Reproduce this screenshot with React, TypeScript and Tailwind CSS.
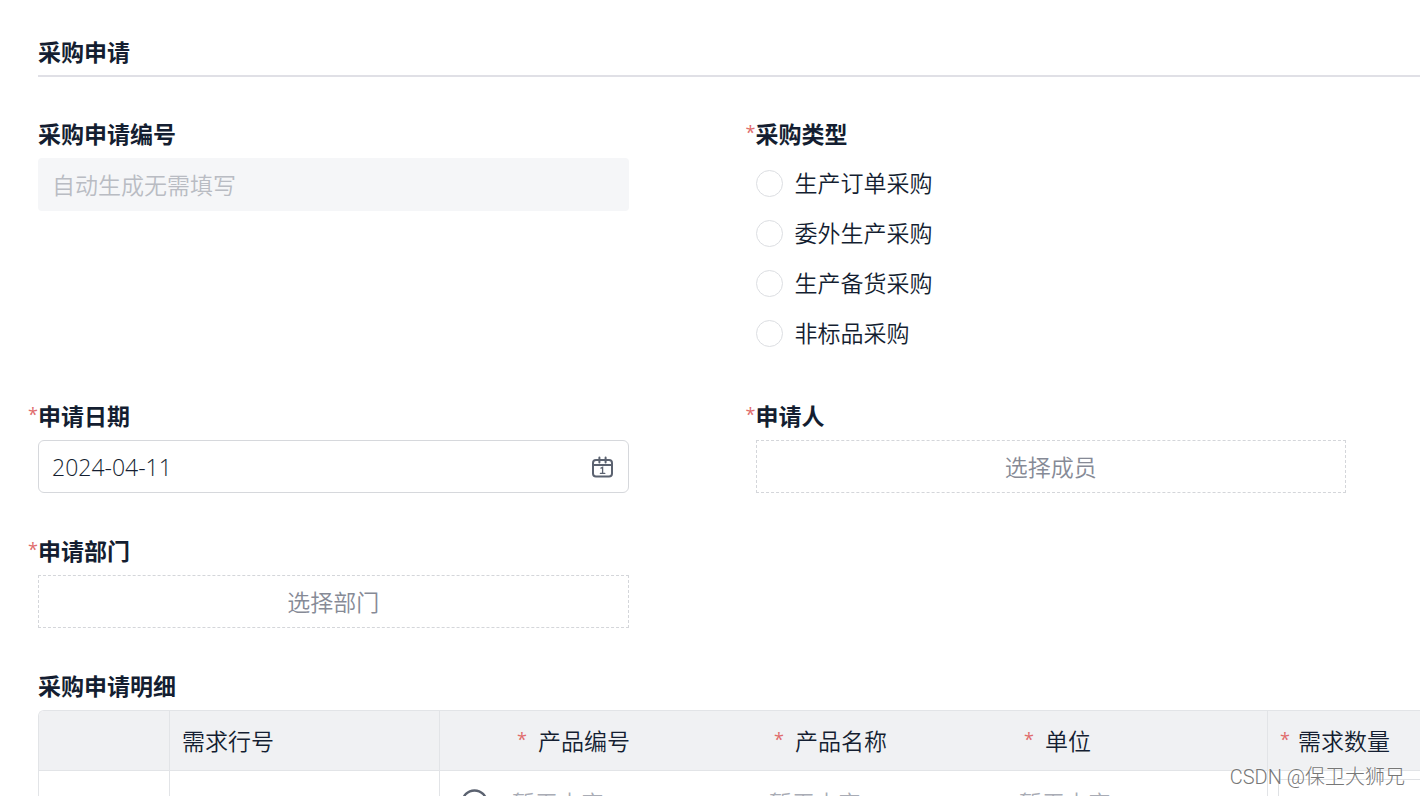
import { useState } from "react";
import { CirclePlus } from "lucide-react";

const purchaseTypes = ["生产订单采购", "委外生产采购", "生产备货采购", "非标品采购"];

function Star() {
  return <span className="pb-1 text-[18px] font-normal text-[#e06c6c]">*</span>;
}

function CalendarIcon() {
  return (
    <svg width="24" height="24" viewBox="0 0 24 24" fill="none" stroke="#5b6270" strokeWidth="2" strokeLinecap="round">
      <rect x="3" y="5" width="19" height="16.6" rx="3" />
      <path d="M3 10h19M9.4 2.6v4.8M15.6 2.6v4.8" />
      <path d="M11 13.2l1.6-.8v6M10.4 18.4h4.4" strokeWidth="1.3" />
    </svg>
  );
}

function FieldLabel({ text, id, required = false }: { text: string; id?: string; required?: boolean }) {
  return (
    <label htmlFor={id} className={`flex h-8 items-center font-bold ${required ? "-ml-[10px]" : ""}`}>
      {required && <Star />}
      {text}
    </label>
  );
}

function PickerButton({ id, children }: { id: string; children: string }) {
  return (
    <button
      id={id}
      type="button"
      className="h-[53px] w-full border border-dashed border-[#d4d6da] text-center font-[350] text-[#868a96]"
    >
      {children}
    </button>
  );
}

export default function App() {
  const [date, setDate] = useState("2024-04-11");
  const [type, setType] = useState("");

  return (
    <div className="relative h-screen overflow-hidden bg-white pl-[38px] pt-9 font-['Open_Sans','Noto_Sans_CJK_SC',sans-serif] text-[23px] leading-8 text-[#141e31]">
      <h1 className="border-b-2 border-[#e0e0e6] pb-[7px] font-bold">采购申请</h1>

      <form>
        <div className="mt-[41px] grid grid-cols-2 gap-x-[127px] gap-y-[42px] pr-[74px]">
          <div className="flex flex-col gap-2">
            <FieldLabel id="code" text="采购申请编号" />
            <input
              id="code"
              disabled
              placeholder="自动生成无需填写"
              className="h-[53px] w-full rounded-sm bg-[#f5f6f8] px-[14px] font-[350] placeholder:text-[#b9bcc3]"
            />
          </div>

          {/* Purchase type */}
          <fieldset>
            <legend className="mb-2 -ml-[10px] flex h-8 items-center font-bold">
              <Star />
              采购类型
            </legend>
            {purchaseTypes.map((t) => (
              <label key={t} className="flex h-[50px] items-center gap-3 font-[350]">
                <input
                  type="radio"
                  name="type"
                  checked={type === t}
                  onChange={() => setType(t)}
                  className="size-[27px] appearance-none rounded-full border border-[#dcdee2] bg-white checked:border-8 checked:border-blue-500"
                />
                {t}
              </label>
            ))}
          </fieldset>

          <div className="flex flex-col gap-2">
            <FieldLabel id="date" text="申请日期" required />
            <div className="flex h-[53px] items-center rounded-md border border-[#d6d8dc] pl-[13px] pr-[14px]">
              <input
                id="date"
                value={date}
                onChange={(e) => setDate(e.target.value)}
                className="min-w-0 flex-1 font-[350] outline-none"
              />
              <button type="button" aria-label="选择日期">
                <CalendarIcon />
              </button>
            </div>
          </div>

          <div className="flex flex-col gap-2">
            <FieldLabel id="member" text="申请人" required />
            <PickerButton id="member">选择成员</PickerButton>
          </div>

          <div className="flex flex-col gap-2">
            <FieldLabel id="dept" text="申请部门" required />
            <PickerButton id="dept">选择部门</PickerButton>
          </div>
        </div>

        {/* Detail lines */}
        <h2 className="mt-[42px] mb-2 font-bold">采购申请明细</h2>
        <table className="w-[110%] min-w-[1500px] table-fixed border-separate border-spacing-0 overflow-hidden rounded-tl-md border-l border-t border-[#e2e4e7] text-left font-[350]">
          <colgroup>
            <col className="w-[131px]" />
            <col className="w-[270px]" />
            <col className="w-[62px]" />
            <col className="w-[257px]" />
            <col className="w-[250px]" />
            <col className="w-[259px]" />
            <col />
          </colgroup>
          <thead>
            <tr className="h-[60px] bg-[#f0f1f3]">
              <th className="border-b border-r border-[#e2e4e7]" />
              <th className="border-b border-r border-[#e2e4e7] pl-3 font-[350]">需求行号</th>
              <th className="border-b border-[#e2e4e7]" />
              <th className="border-b border-[#e2e4e7] pl-[15px] font-[350]">
                <span className="flex items-center gap-[11px]"><Star />产品编号</span>
              </th>
              <th className="border-b border-[#e2e4e7] pl-[15px] font-[350]">
                <span className="flex items-center gap-[11px]"><Star />产品名称</span>
              </th>
              <th className="border-b border-r border-[#e2e4e7] pl-[15px] font-[350]">
                <span className="flex items-center gap-[11px]"><Star />单位</span>
              </th>
              <th className="border-b border-[#e2e4e7] pl-3 font-[350]">
                <span className="flex items-center gap-2"><Star />需求数量</span>
              </th>
            </tr>
          </thead>
          <tbody>
            <tr className="h-16 text-[#a9acb5]">
              <td className="border-b border-r border-[#e2e4e7]" />
              <td className="border-b border-r border-[#e2e4e7]" />
              <td className="border-b border-[#e2e4e7] pl-5">
                <button type="button" aria-label="选择产品" className="block text-[#5b6270]">
                  <CirclePlus size={29} strokeWidth={2} />
                </button>
              </td>
              <td className="border-b border-[#e2e4e7] pl-[10px]">暂无内容</td>
              <td className="border-b border-[#e2e4e7] pl-[10px]">暂无内容</td>
              <td className="border-b border-r border-[#e2e4e7] pl-[10px]">暂无内容</td>
              <td className="border-b border-[#e2e4e7] px-[10px]">
                <input aria-label="需求数量" className="block h-12 w-full border border-[#dfe1e4] px-3" />
              </td>
            </tr>
          </tbody>
        </table>
      </form>

      <div className="absolute right-[15px] bottom-1 font-['Roboto','Noto_Sans_CJK_SC',sans-serif] text-[20px] leading-[30px] font-light text-[#777777] [text-shadow:0_0_2px_white]">
        CSDN @保卫大狮兄
      </div>
    </div>
  );
}
